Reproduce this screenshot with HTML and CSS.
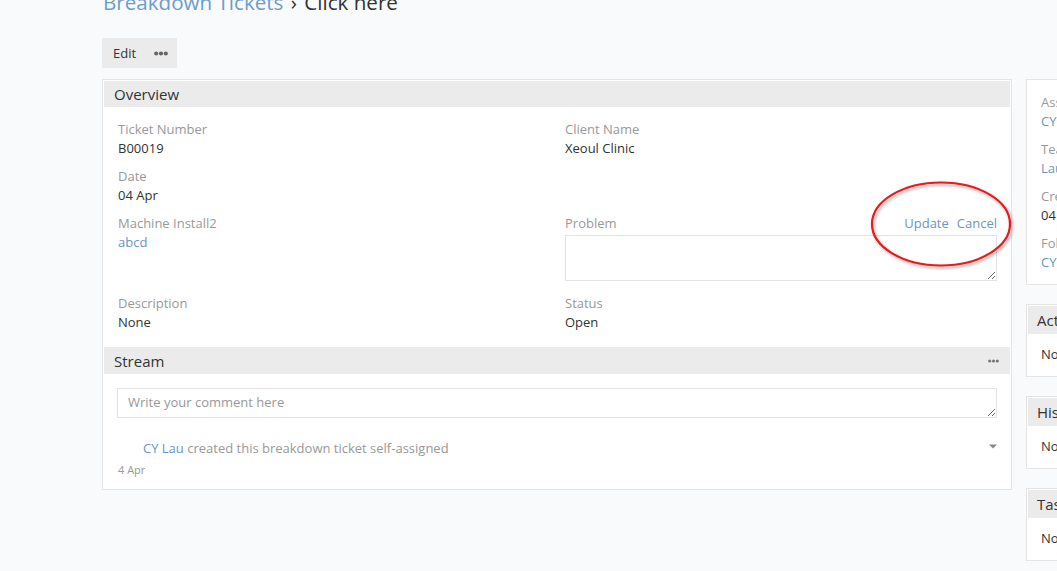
FILE: index.html
```html
<!DOCTYPE html>
<html lang="en">
<head>
<meta charset="utf-8">
<title>Breakdown Tickets › Click here</title>
<link rel="stylesheet" href="styles.css">
</head>
<body>
<div class="page">
  <h1 class="header-title"><a class="crumb" href="#">Breakdown Tickets</a> <span class="sep">›</span> Click here</h1>

  <div class="actions">
    <button class="btn btn-edit" type="button">Edit</button>
    <button class="btn btn-more" type="button" aria-label="More">
      <svg width="14" height="5" viewBox="0 0 14 5"><circle cx="2.2" cy="2.5" r="2.1"/><circle cx="7" cy="2.5" r="2.1"/><circle cx="11.8" cy="2.5" r="2.1"/></svg>
    </button>
  </div>

  <div class="layout">
    <div class="main">
      <div class="record">
        <div class="panel-heading">Overview</div>
        <div class="panel-body fields">
          <div class="cell">
            <div class="label">Ticket Number</div>
            <div class="value">B00019</div>
          </div>
          <div class="cell">
            <div class="label">Client Name</div>
            <div class="value">Xeoul Clinic</div>
          </div>
          <div class="cell">
            <div class="label">Date</div>
            <div class="value">04 Apr</div>
          </div>
          <div class="cell"></div>
          <div class="cell">
            <div class="label">Machine Install2</div>
            <div class="value"><a href="#">abcd</a></div>
          </div>
          <div class="cell">
            <div class="label label-row">
              <span>Problem</span>
              <span class="inline-actions"><a href="#">Update</a><a href="#">Cancel</a></span>
            </div>
            <textarea class="field-input problem"></textarea>
          </div>
          <div class="cell">
            <div class="label">Description</div>
            <div class="value">None</div>
          </div>
          <div class="cell">
            <div class="label">Status</div>
            <div class="value">Open</div>
          </div>
        </div>

        <div class="panel-heading heading-row">
          <span>Stream</span>
          <svg class="small-dots" width="11" height="4" viewBox="0 0 11 4"><circle cx="1.7" cy="2" r="1.6"/><circle cx="5.5" cy="2" r="1.6"/><circle cx="9.3" cy="2" r="1.6"/></svg>
        </div>
        <div class="panel-body stream">
          <textarea class="field-input comment" placeholder="Write your comment here"></textarea>
          <div class="note">
            <div class="note-line">
              <span class="note-text"><a href="#">CY Lau</a> created this breakdown ticket self-assigned</span>
              <svg class="caret" width="8" height="5" viewBox="0 0 8 5"><path d="M0 0.5h8L4 4.5z"/></svg>
            </div>
            <div class="note-date">4 Apr</div>
          </div>
        </div>
      </div>

      <svg class="annotation" width="152" height="94" viewBox="0 0 152 94">
        <defs>
          <filter id="ring-shadow" x="-10%" y="-10%" width="125%" height="130%">
            <feDropShadow dx="1.5" dy="2" stdDeviation="1.6" flood-color="#000" flood-opacity="0.35"/>
          </filter>
        </defs>
        <ellipse cx="73" cy="45" rx="69" ry="41.5" fill="none" stroke="#e41b1b" stroke-width="2.2" filter="url(#ring-shadow)"/>
      </svg>
    </div>

    <aside class="side">
      <div class="record side-box">
        <div class="panel-body">
          <div class="cell">
            <div class="label">Assigned User</div>
            <div class="value"><a href="#">CY Lau</a></div>
          </div>
          <div class="cell">
            <div class="label">Teams</div>
            <div class="value"><a href="#">Lau Team</a></div>
          </div>
          <div class="cell">
            <div class="label">Created</div>
            <div class="value">04 Apr 10:15</div>
          </div>
          <div class="cell">
            <div class="label">Followers</div>
            <div class="value"><a href="#">CY Lau</a></div>
          </div>
        </div>
      </div>

      <div class="record side-box">
        <div class="panel-heading">Activities</div>
        <div class="panel-body empty">No Data</div>
      </div>
      <div class="record side-box">
        <div class="panel-heading">History</div>
        <div class="panel-body empty">No Data</div>
      </div>
      <div class="record side-box">
        <div class="panel-heading">Tasks</div>
        <div class="panel-body empty">No Data</div>
      </div>
    </aside>
  </div>
</div>
</body>
</html>
```

FILE: styles.css
```css
html, body {
  margin: 0;
  padding: 0;
}

body {
  background: #f9fafc;
  font-family: "Open Sans", "DejaVu Sans", sans-serif;
  font-size: 13px;
  line-height: 19px;
  color: #333;
  overflow: hidden;
}

a {
  color: #6a95c4;
  text-decoration: none;
}

.page {
  padding-left: 102px;
  width: 1300px;
}

/* page title with breadcrumb */
.header-title {
  margin: -12px 0 0 1px;
  font-size: 20.6px;
  line-height: 28px;
  font-weight: normal;
  color: #333;
  white-space: nowrap;
}

.header-title .crumb {
  color: #6e9ccb;
}

.header-title .sep {
  margin: 0 2px;
}

/* button group */
.actions {
  display: flex;
  margin-top: 22px;
  height: 30px;
}

.btn {
  border: 0;
  margin: 0;
  background: #ebebeb;
  font-family: inherit;
  font-size: 13px;
  color: #333;
  height: 30px;
  display: flex;
  align-items: center;
  cursor: pointer;
}

.btn-edit {
  padding: 0 9px 0 11px;
}

.btn-more {
  padding: 0 9px;
}

.btn-more svg {
  fill: #666;
}

.layout {
  display: flex;
  margin-top: 11px;
  align-items: flex-start;
}

.main {
  width: 910px;
  position: relative;
  flex: none;
}

.side {
  width: 300px;
  margin-left: 14px;
  flex: none;
}

/* panels */
.record {
  background: #fff;
  border: 1px solid #e4e4e4;
  padding: 1px;
}

.panel-heading {
  background: #ebebeb;
  height: 26px;
  line-height: 26px;
  padding: 0 10px;
  font-size: 15px;
  color: #333;
}

.heading-row {
  display: flex;
  align-items: center;
  justify-content: space-between;
  padding-right: 11px;
  height: 27px;
}

.small-dots {
  fill: #777;
}

.panel-body {
  padding: 13px 13px 6px 14px;
}

.fields {
  display: grid;
  grid-template-columns: 432px 432px;
  column-gap: 15px;
}

.cell {
  margin-bottom: 9px;
}

.label {
  color: #999;
}

.value {
  color: #333;
}

.label-row {
  display: flex;
  justify-content: space-between;
}

.inline-actions {
  display: flex;
  gap: 8px;
}

.field-input {
  display: block;
  box-sizing: border-box;
  width: 100%;
  border: 1px solid #e3e3e3;
  background: #fff;
  font-family: inherit;
  font-size: 13px;
  color: #333;
  outline: none;
  margin: 0;
}

.problem {
  height: 46px;
  margin-top: 2px;
  margin-bottom: 4px;
  resize: vertical;
}

/* stream */
.stream {
  padding: 14px 13px 10px 13px;
}

.comment {
  height: 30px;
  line-height: 19px;
  padding: 4px 10px;
  resize: vertical;
}

.comment::placeholder {
  color: #999;
}

.note {
  margin-top: 21px;
  padding-left: 1px;
}

.note-line {
  display: flex;
  justify-content: space-between;
  align-items: flex-start;
}

.note-text {
  padding-left: 25px;
  color: #999;
}

.caret {
  fill: #888;
  margin-top: 5px;
}

.note-date {
  font-size: 11px;
  line-height: 16px;
  margin-top: 4px;
  color: #999;
}

/* hand-drawn highlight ring */
.annotation {
  position: absolute;
  left: 766px;
  top: 100px;
  pointer-events: none;
}

/* side column */
.side-box {
  margin-bottom: 19px;
}

.side-box .panel-body {
  padding: 12px 13px 2px 13px;
}

.side-box .panel-heading {
  height: 28px;
  line-height: 28px;
  padding-left: 9px;
}

.side-box .empty {
  padding: 11px 13px 11px 13px;
  color: #333;
}
```
